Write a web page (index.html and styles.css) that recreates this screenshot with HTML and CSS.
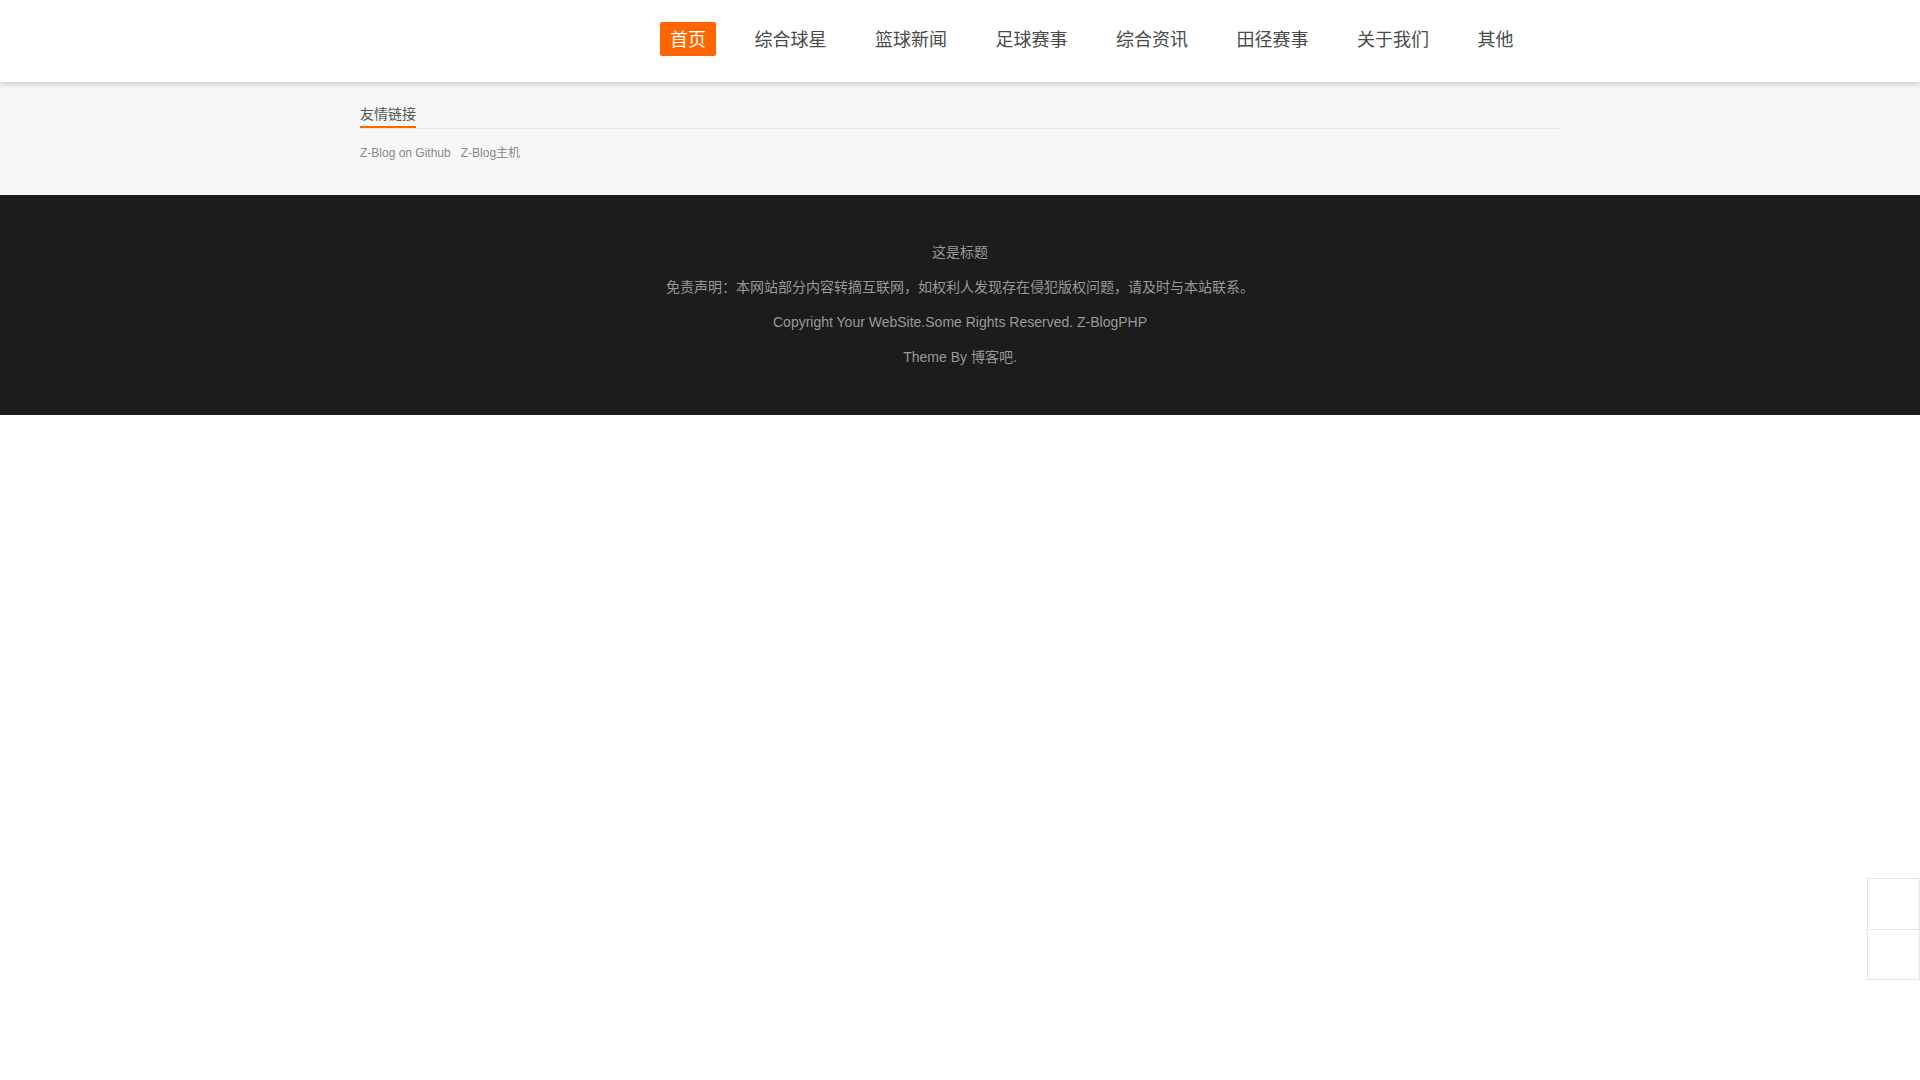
FILE: index.html
```html
<!DOCTYPE html>
<html lang="zh-CN">
<head>
<meta charset="utf-8">
<title>这是标题</title>
<link rel="stylesheet" href="styles.css">
</head>
<body>
<header class="header">
  <div class="wrap header-inner">
    <nav class="nav">
      <a class="nav-item active" href="#">首页</a>
      <a class="nav-item" href="#">综合球星</a>
      <a class="nav-item" href="#">篮球新闻</a>
      <a class="nav-item" href="#">足球赛事</a>
      <a class="nav-item" href="#">综合资讯</a>
      <a class="nav-item" href="#">田径赛事</a>
      <a class="nav-item" href="#">关于我们</a>
      <a class="nav-item" href="#">其他</a>
    </nav>
  </div>
</header>

<section class="links">
  <div class="wrap">
    <div class="links-head"><span class="links-title">友情链接</span></div>
    <div class="links-list">
      <a href="#">Z-Blog on Github</a>
      <a href="#">Z-Blog主机</a>
    </div>
  </div>
</section>

<footer class="footer">
  <p>这是标题</p>
  <p>免责声明：本网站部分内容转摘互联网，如权利人发现存在侵犯版权问题，请及时与本站联系。</p>
  <p>Copyright Your WebSite.Some Rights Reserved. Z-BlogPHP</p>
  <p>Theme By 博客吧.</p>
</footer>

<div class="side-tools">
  <a class="side-btn" href="#"></a>
  <a class="side-btn" href="#"></a>
</div>
</body>
</html>
```

FILE: styles.css
```css
* { box-sizing: border-box; }
html, body {
  margin: 0;
  padding: 0;
  background: #fff;
  font-family: "Liberation Sans", "Noto Sans CJK SC", sans-serif;
}
a { text-decoration: none; }

.wrap {
  width: 1200px;
  margin: 0 auto;
}

.header {
  height: 82px;
  background: #fff;
  box-shadow: 0 2px 6px rgba(0, 0, 0, 0.2);
  position: relative;
  z-index: 2;
}
.header-inner {
  display: flex;
  justify-content: flex-end;
  padding-right: 36.5px;
}
.nav {
  display: flex;
  gap: 28.5px;
  margin-top: 22px;
}
.nav-item {
  display: block;
  height: 34px;
  line-height: 33px;
  padding: 0 10px;
  font-size: 18px;
  color: #4a4a4a;
  border-radius: 2px;
  font-family: "Noto Sans CJK SC", sans-serif;
}
.nav-item.active {
  background: #ff6600;
  color: #fff;
}

.links {
  background: #f7f7f7;
  padding: 21px 0 32px;
}
.links-head {
  border-bottom: 1px solid #e8e8e8;
}
.links-title {
  display: inline-block;
  font-size: 14px;
  line-height: 20px;
  color: #555;
  padding-bottom: 3px;
  border-bottom: 2px solid #ff6600;
  font-family: "Noto Sans CJK SC", sans-serif;
}
.links-list {
  display: flex;
  gap: 10px;
  margin-top: 14px;
  line-height: 20px;
}
.links-list a {
  font-size: 12px;
  color: #888;
}

.footer {
  background: #1c1c1c;
  padding: 40px 0;
  text-align: center;
}
.footer p {
  margin: 0;
  line-height: 35px;
  font-size: 14px;
  color: #999;
}

.side-tools {
  position: fixed;
  right: 0;
  bottom: 100px;
  width: 53px;
  border: 1px solid #e5e5e5;
  background: #fff;
}
.side-btn {
  display: block;
  height: 50px;
}
.side-btn + .side-btn {
  border-top: 1px solid #e5e5e5;
}
```
